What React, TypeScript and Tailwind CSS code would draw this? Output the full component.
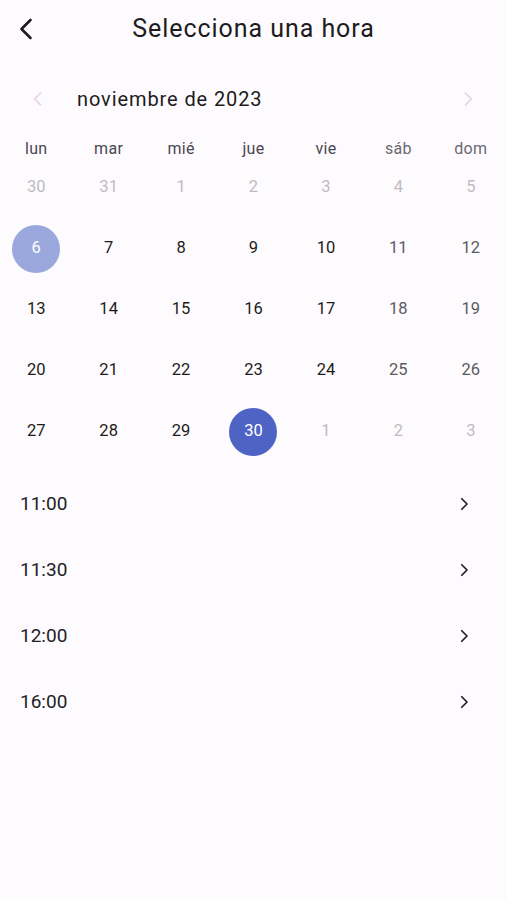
const weekdays = ['lun', 'mar', 'mié', 'jue', 'vie', 'sáb', 'dom'];

type Day = { n: number; muted?: boolean };

const weeks: Day[][] = [
    [{ n: 30, muted: true }, { n: 31, muted: true }, { n: 1, muted: true }, { n: 2, muted: true }, { n: 3, muted: true }, { n: 4, muted: true }, { n: 5, muted: true }],
    [{ n: 6 }, { n: 7 }, { n: 8 }, { n: 9 }, { n: 10 }, { n: 11 }, { n: 12 }],
    [{ n: 13 }, { n: 14 }, { n: 15 }, { n: 16 }, { n: 17 }, { n: 18 }, { n: 19 }],
    [{ n: 20 }, { n: 21 }, { n: 22 }, { n: 23 }, { n: 24 }, { n: 25 }, { n: 26 }],
    [{ n: 27 }, { n: 28 }, { n: 29 }, { n: 30 }, { n: 1, muted: true }, { n: 2, muted: true }, { n: 3, muted: true }],
];

const times = ['11:00', '11:30', '12:00', '16:00'];

const Chevron = ({ dir, className }: { dir: 'left' | 'right'; className?: string }) => (
    <svg viewBox="0 0 24 24" className={className} fill="none" stroke="currentColor" strokeLinecap="round" strokeLinejoin="round">
        {dir === 'left' ? <path d="M15 5 8 12l7 7" /> : <path d="m9 5 7 7-7 7" />}
    </svg>
);

export default function App() {
    return (
        <div className="w-[507px] h-[900px] bg-[#fdfbfe] text-[#1d1b20] font-['Roboto',sans-serif]">
            {/* Header */}
            <div className="h-[58px] flex items-center">
                <button className="ml-[10px] w-[32px] h-[40px] flex items-center justify-center text-[#1d1b20]">
                    <svg viewBox="0 0 16 22" className="w-[16px] h-[22px]" fill="none" stroke="currentColor" strokeWidth="2.6" strokeLinecap="round" strokeLinejoin="round">
                        <path d="M12.5 2 3.5 11l9 9" />
                    </svg>
                </button>
                <h1 className="flex-1 text-center text-[25px] tracking-[0.95px] mr-[42px]">Selecciona una hora</h1>
            </div>

            {/* Month selector */}
            <div className="mt-[21px] h-[40px] flex items-center">
                <div className="ml-[14px] w-[48px] h-[40px] flex items-center justify-center text-[#e6d3e6]">
                    <Chevron dir="left" className="w-[20px] h-[20px] stroke-[2]" />
                </div>
                <div className="ml-[15px] text-[20px] tracking-[0.9px] text-[#1d1b20]">noviembre de 2023</div>
                <div className="ml-auto mr-[15px] w-[48px] h-[40px] flex items-center justify-center text-[#e6d3e6]">
                    <Chevron dir="right" className="w-[20px] h-[20px] stroke-[2]" />
                </div>
            </div>

            {/* Weekdays */}
            <div className="mt-[6px] h-[32px] grid grid-cols-7 items-end">
                {weekdays.map((w, i) => (
                    <div key={w} className={`text-center text-[16px] leading-[16px] tracking-[0.3px] ${i >= 5 ? 'text-[#6b6870]' : 'text-[#4a4750]'}`}>
                        {w}
                    </div>
                ))}
            </div>

            {/* Days */}
            <div className="grid grid-cols-7">
                {weeks.map((week, wi) =>
                    week.map((d, di) => {
                        const isToday = wi === 1 && di === 0;
                        const isSelected = wi === 4 && di === 3;
                        let color = di >= 5 ? 'text-[#5c5a61]' : 'text-[#1d1b20]';
                        if (d.muted) color = 'text-[#bdbbc0]';
                        return (
                            <div key={`${wi}-${di}`} className="h-[61px] flex items-center justify-center">
                                {isToday || isSelected ? (
                                    <div
                                        className={`w-[48px] h-[48px] rounded-full flex items-center justify-center text-[16.5px] text-white ${
                                            isSelected ? 'bg-[#4f63c4]' : 'bg-[#9aa8dd]'
                                        }`}
                                    >
                                        {d.n}
                                    </div>
                                ) : (
                                    <span className={`text-[16.5px] ${color}`}>{d.n}</span>
                                )}
                            </div>
                        );
                    })
                )}
            </div>

            {/* Time slots */}
            <div className="mt-[9px]">
                {times.map((t) => (
                    <div key={t} className="h-[66px] flex items-center pl-[20px] pr-[34px]">
                        <span className="text-[19px] text-[#222125]">{t}</span>
                        <Chevron dir="right" className="ml-auto w-[18px] h-[18px] stroke-[2.3] text-[#222125]" />
                    </div>
                ))}
            </div>
        </div>
    );
}
